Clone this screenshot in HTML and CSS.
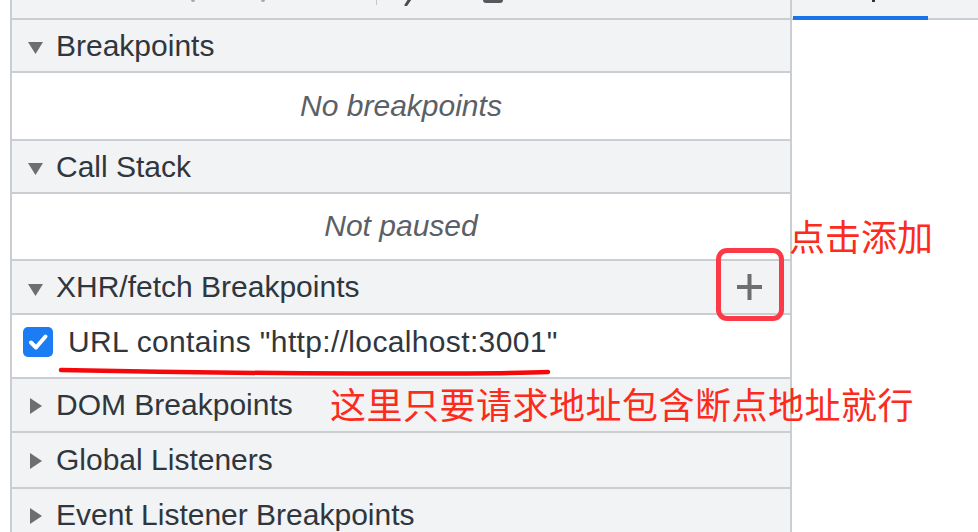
FILE: index.html
```html
<!DOCTYPE html>
<html lang="zh-CN">
<head>
<meta charset="utf-8">
<title>Breakpoints</title>
<link rel="stylesheet" href="styles.css">
</head>
<body>
<div class="app">
  <div class="gutter"></div>
  <div class="sidebar">
    <div class="toolbar">
      <span class="tb-dot tb-d1"></span>
      <span class="tb-dot tb-d2"></span>
      <span class="tb-sep"></span>
      <svg class="tb-slash" width="10" height="6" viewBox="0 0 10 6"><path d="M9 -1 L5 5" stroke="#4a4d52" stroke-width="3" stroke-linecap="round"/></svg>
      <span class="tb-box"></span>
    </div>

    <div class="pane-header h-bp">
      <span class="tri"><svg class="tri-down" width="15" height="12" viewBox="0 0 15 12"><path d="M0 0 H15 L7.5 12 Z" fill="#6e6e6e"/></svg></span>
      <span class="title">Breakpoints</span>
    </div>
    <div class="pane-body b-bp"><span class="empty">No breakpoints</span></div>

    <div class="pane-header h-cs">
      <span class="tri"><svg class="tri-down" width="15" height="12" viewBox="0 0 15 12"><path d="M0 0 H15 L7.5 12 Z" fill="#6e6e6e"/></svg></span>
      <span class="title">Call Stack</span>
    </div>
    <div class="pane-body b-cs"><span class="empty">Not paused</span></div>

    <div class="pane-header h-xhr">
      <span class="tri"><svg class="tri-down" width="15" height="12" viewBox="0 0 15 12"><path d="M0 0 H15 L7.5 12 Z" fill="#6e6e6e"/></svg></span>
      <span class="title">XHR/fetch Breakpoints</span>
      <span class="add-btn"><svg width="25" height="26" viewBox="0 0 25 26"><rect x="0" y="11" width="25" height="4" fill="#6e6e6e"/><rect x="10.5" y="0" width="4" height="26" fill="#6e6e6e"/></svg></span>
    </div>
    <div class="url-row">
      <span class="checkbox"><svg width="30" height="30" viewBox="0 0 30 30"><path d="M8 15.5 L13 20.5 L22.5 9.5" fill="none" stroke="#fff" stroke-width="4" stroke-linecap="round" stroke-linejoin="round"/></svg></span>
      <span class="url-text">URL contains "http://localhost:3001"</span>
    </div>

    <div class="pane-header h-dom">
      <span class="tri"><svg class="tri-right" width="12" height="16" viewBox="0 0 12 16"><path d="M0 0 L12 8 L0 16 Z" fill="#6e6e6e"/></svg></span>
      <span class="title">DOM Breakpoints</span>
    </div>
    <div class="pane-header h-gl">
      <span class="tri"><svg class="tri-right" width="12" height="16" viewBox="0 0 12 16"><path d="M0 0 L12 8 L0 16 Z" fill="#6e6e6e"/></svg></span>
      <span class="title">Global Listeners</span>
    </div>
    <div class="pane-header h-ev">
      <span class="tri"><svg class="tri-right" width="12" height="16" viewBox="0 0 12 16"><path d="M0 0 L12 8 L0 16 Z" fill="#6e6e6e"/></svg></span>
      <span class="title">Event Listener Breakpoints</span>
    </div>
  </div>
  <div class="right">
    <div class="tabbar">
      <div class="tab"><span class="tab-char"></span></div>
    </div>
  </div>

  <div class="note note-add">点击添加</div>
  <div class="highlight-box"></div>
  <svg class="underline" width="500" height="20" viewBox="0 0 500 20"><path d="M5 8 Q 150 11 300 11.5 T 492 10" fill="none" stroke="#f5080b" stroke-width="4.5" stroke-linecap="round"/></svg>
  <div class="note note-url">这里只要请求地址包含断点地址就行</div>
</div>
</body>
</html>
```

FILE: styles.css
```css
html, body {
  margin: 0;
  padding: 0;
  background: #fff;
}

.app {
  position: relative;
  display: flex;
  width: 978px;
  height: 532px;
  overflow: hidden;
  font-family: "Liberation Sans", Arial, sans-serif;
  color: #30363d;
}

.gutter {
  width: 10px;
  flex: none;
  background: #fff;
  border-right: 2px solid #cacdd1;
}

.sidebar {
  width: 778px;
  flex: none;
  display: flex;
  flex-direction: column;
  background: #f1f3f4;
  border-right: 2px solid #cacdd1;
}

.right {
  flex: 1;
  background: #fff;
}

/* toolbar (cut off at the top) */
.toolbar {
  height: 18px;
  flex: none;
  display: flex;
  align-items: flex-start;
  background: #f1f3f4;
  border-bottom: 2px solid #cacdd1;
}
.tb-dot {
  width: 4px;
  height: 2px;
  background: #a4a8ad;
  border-radius: 0 0 2px 2px;
}
.tb-d1 { margin-left: 179px; }
.tb-d2 { margin-left: 66px; }
.tb-sep {
  width: 1px;
  height: 5px;
  margin-left: 111px;
  background: #c4c7cc;
}
.tb-slash {
  margin-left: 24px;
}
.tb-box {
  width: 20px;
  height: 3px;
  margin-left: 72px;
  background: #55585d;
  border-radius: 0 0 5px 5px;
}

/* pane headers */
.pane-header {
  display: flex;
  align-items: center;
  flex: none;
  padding-left: 16px;
  background: #f1f3f4;
  border-bottom: 2px solid #cacdd1;
  font-size: 30px;
  white-space: nowrap;
}
.h-bp { height: 51px; }
.h-cs { height: 51px; }
.h-xhr { height: 52px; }
.h-dom { height: 52px; }
.h-gl { height: 54px; }
.h-ev { height: 52px; border-bottom: none; }

.tri {
  width: 28px;
  flex: none;
  display: flex;
  align-items: center;
}
.tri-down {
  margin-top: 5px;
}
.tri-right {
  margin-left: 2px;
  margin-top: 1px;
}

.add-btn {
  margin-left: auto;
  margin-right: 28px;
  display: flex;
}

/* pane bodies */
.pane-body {
  display: flex;
  align-items: center;
  justify-content: center;
  flex: none;
  background: #fff;
  border-bottom: 2px solid #cacdd1;
  box-sizing: border-box;
  padding-bottom: 1px;
}
.b-bp { height: 68px; }
.b-cs { height: 67px; }
.empty {
  font-size: 30px;
  font-style: italic;
  color: #5b6067;
}

.url-row {
  height: 54px;
  flex: none;
  display: flex;
  align-items: center;
  padding-left: 11px;
  padding-bottom: 8px;
  background: #fff;
  border-bottom: 2px solid #cacdd1;
}
.checkbox {
  width: 30px;
  height: 30px;
  flex: none;
  display: flex;
  border-radius: 5px;
  background: #1b7cf4;
  margin-right: 15px;
}
.url-text {
  font-size: 30px;
  letter-spacing: 0.35px;
  white-space: nowrap;
}

/* right tab bar */
.tabbar {
  height: 18px;
  background: #f1f3f4;
  border-bottom: 2px solid #cacdd1;
  display: flex;
  align-items: flex-end;
}
.tab {
  width: 135px;
  height: 4px;
  margin-left: 1px;
  margin-bottom: -2px;
  background: #1a73e8;
  position: relative;
}
.tab-char {
  position: absolute;
  left: 79px;
  top: -16px;
  width: 3px;
  height: 2px;
  background: #333;
}

/* annotations overlaid on the screenshot */
.note {
  position: absolute;
  font-family: "Noto Sans CJK SC", sans-serif;
  font-size: 36px;
  line-height: 1;
  color: #fc2b1c;
  white-space: nowrap;
}
.note-add {
  left: 789px;
  top: 217px;
}
.note-url {
  left: 330px;
  top: 385px;
  letter-spacing: 0.5px;
}
.highlight-box {
  position: absolute;
  left: 716px;
  top: 248px;
  width: 68px;
  height: 73px;
  box-sizing: border-box;
  border: 5px solid #fc3a47;
  border-radius: 11px;
}
.underline {
  position: absolute;
  left: 56px;
  top: 362px;
}
```
